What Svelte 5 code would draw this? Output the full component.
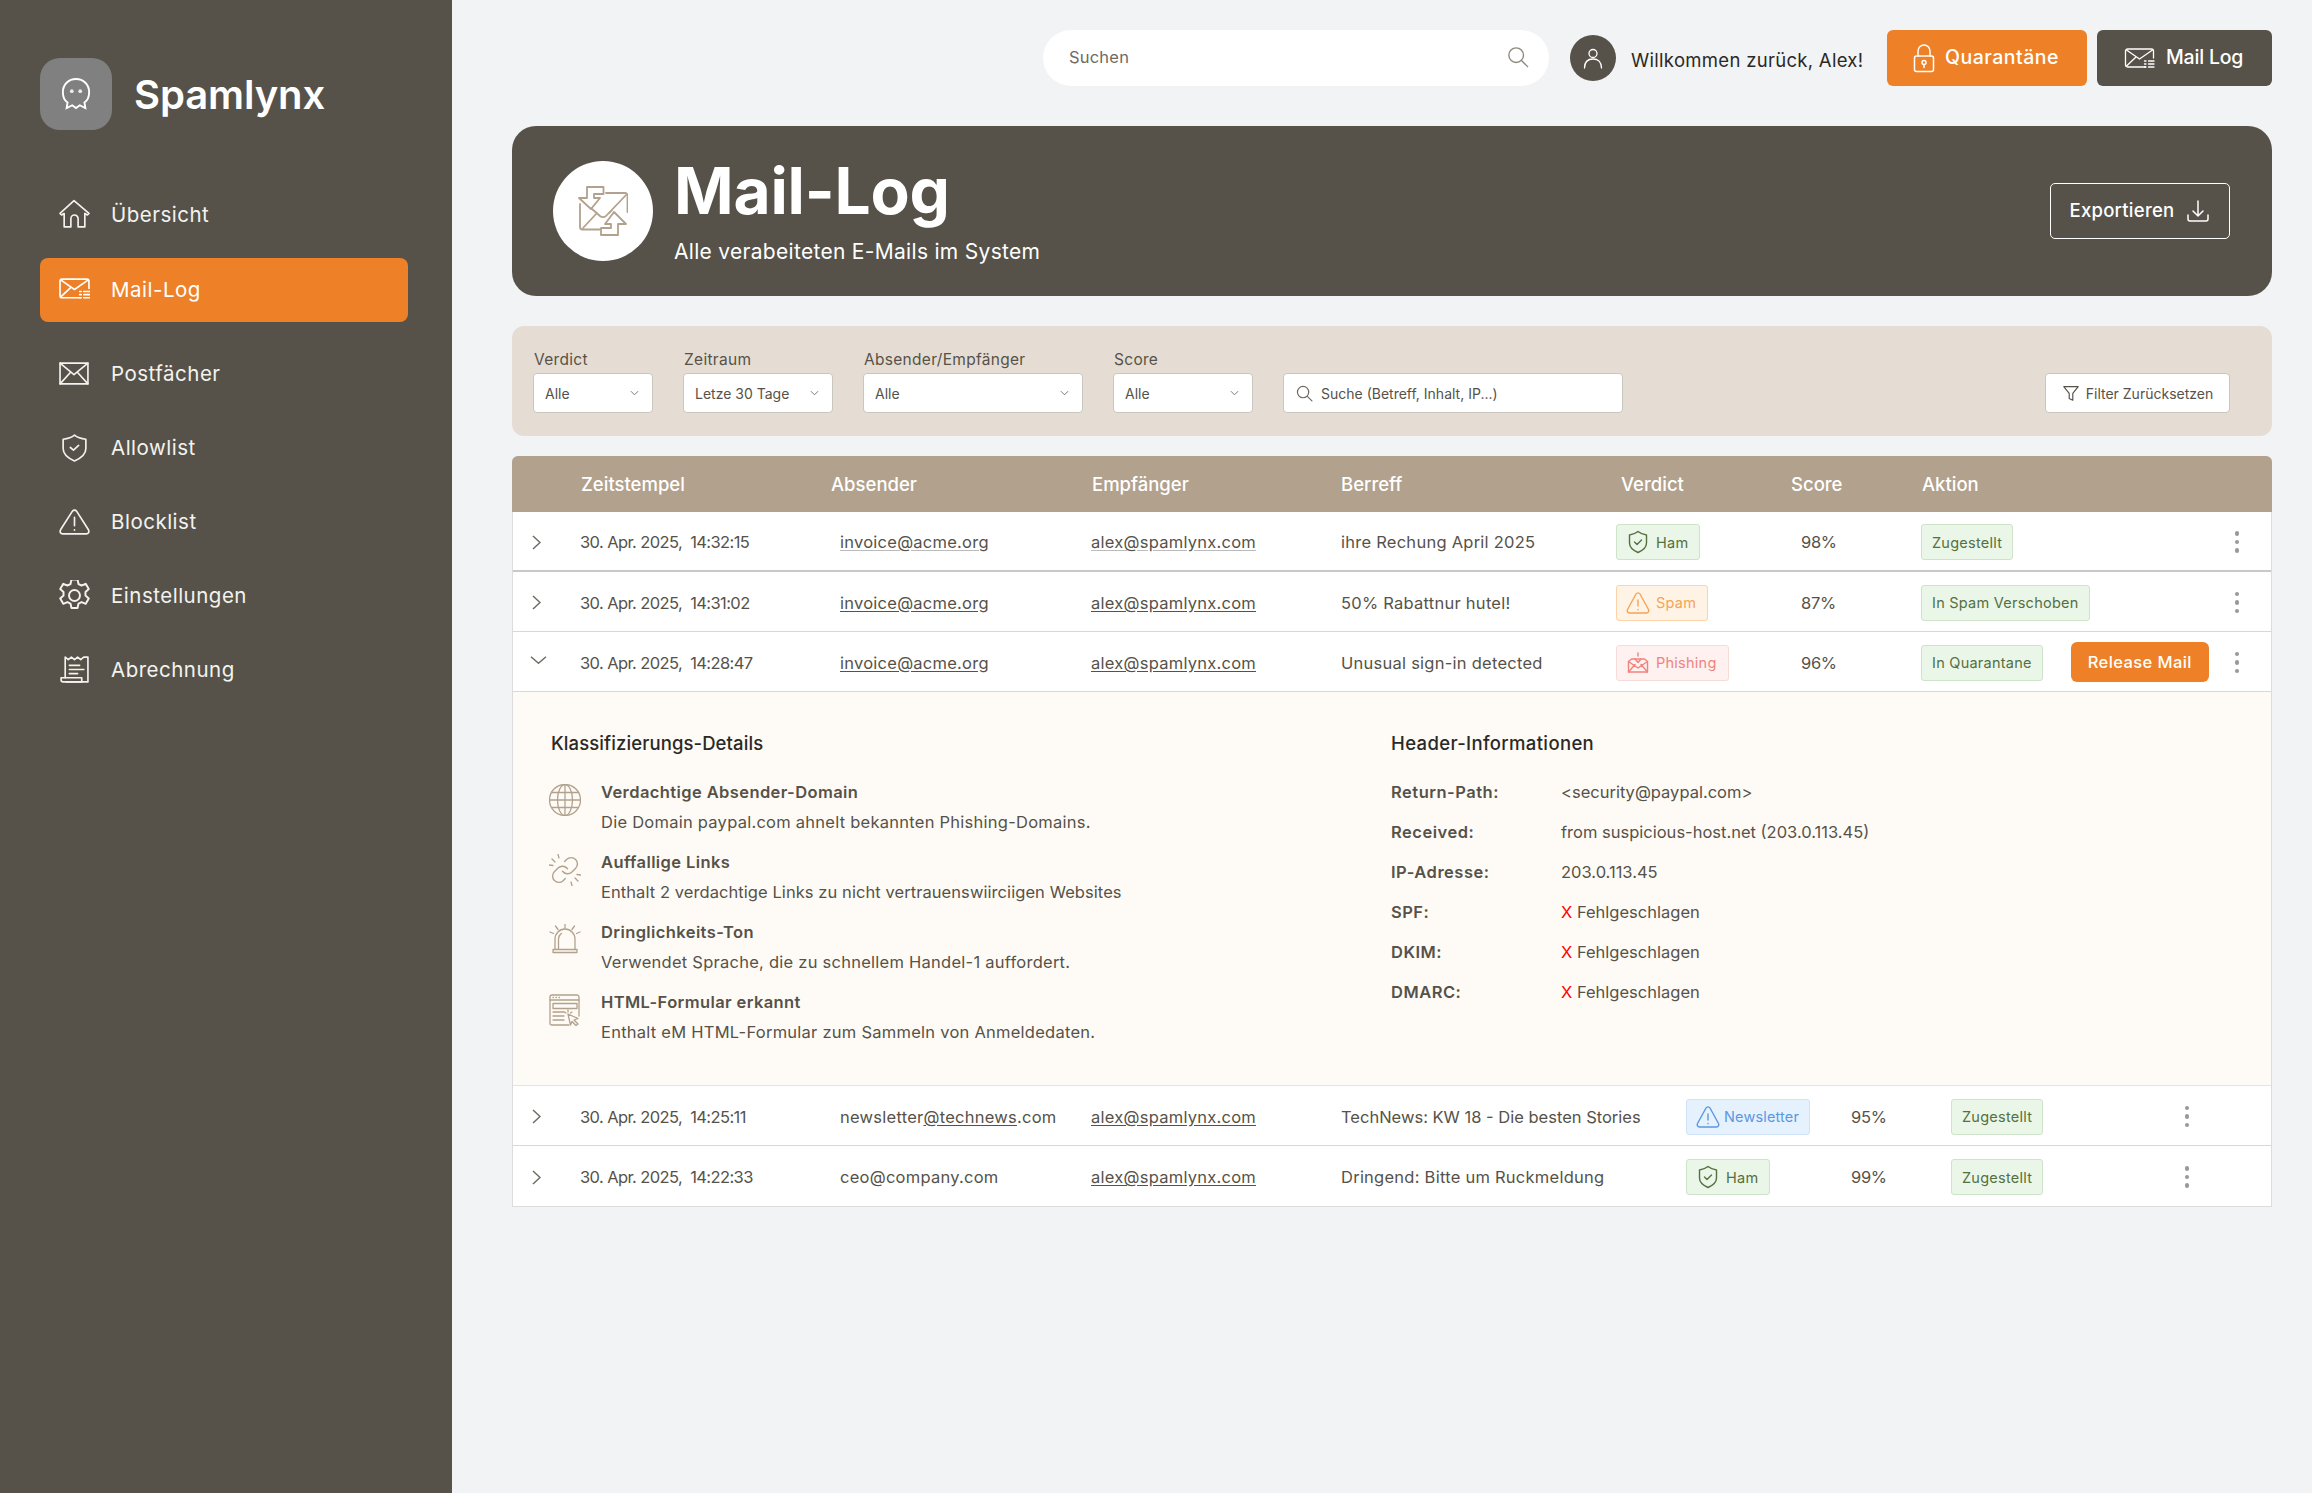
<script lang="ts">
  const nav = [
    { key: 'home', label: 'Übersicht', cls: 'n1' },
    { key: 'log', label: 'Mail-Log', cls: 'active' },
    { key: 'mail', label: 'Postfächer', cls: 'n3' },
    { key: 'shield', label: 'Allowlist', cls: '' },
    { key: 'warn', label: 'Blocklist', cls: '' },
    { key: 'gear', label: 'Einstellungen', cls: '' },
    { key: 'bill', label: 'Abrechnung', cls: '' }
  ];

  const filters = [
    { label: 'Verdict', value: 'Alle', cls: 'f-verdict' },
    { label: 'Zeitraum', value: 'Letze 30 Tage', cls: 'f-time' },
    { label: 'Absender/Empfänger', value: 'Alle', cls: 'f-sender' },
    { label: 'Score', value: 'Alle', cls: 'f-score' }
  ];

  const findings = [
    { icon: 'globe', title: 'Verdachtige Absender-Domain', text: 'Die Domain paypal.com ahnelt bekannten Phishing-Domains.' },
    { icon: 'link', title: 'Auffallige Links', text: 'Enthalt 2 verdachtige Links zu nicht vertrauenswiirciigen Websites' },
    { icon: 'siren', title: 'Dringlichkeits-Ton', text: 'Verwendet Sprache, die zu schnellem Handel-1 auffordert.' },
    { icon: 'form', title: 'HTML-Formular erkannt', text: 'Enthalt eM HTML-Formular zum Sammeln von Anmeldedaten.' }
  ];

  const headers = [
    ['Return-Path:', '<security@paypal.com>'],
    ['Received:', 'from suspicious-host.net (203.0.113.45)'],
    ['IP-Adresse:', '203.0.113.45']
  ];
  const checks = ['SPF:', 'DKIM:', 'DMARC:'];

  const upperRows = [
    { time: '14:32:15', subject: 'ihre Rechung April 2025', verdict: 'Ham', score: '98%', action: 'Zugestellt' },
    { time: '14:31:02', subject: '50% Rabattnur hutel!', verdict: 'Spam', score: '87%', action: 'In Spam Verschoben' },
    { time: '14:28:47', subject: 'Unusual sign-in detected', verdict: 'Phishing', score: '96%', action: 'In Quarantane', open: true }
  ];
</script>

{#snippet navIcon(key)}
  <svg class="nav-icon" viewBox="0 0 30 30" fill="none" stroke="currentColor" stroke-width="1.6" stroke-linecap="round" stroke-linejoin="round">
    {#if key === 'home'}
      <path d="M1 14 14.500 1.500 29 14l-1.500 1.500-2.500-1.500V27h-6.500v-8a3.500 3.500 0 0 0-7 0v8H5V14l-2.500 1.500z" />
    {:else if key === 'log'}
      <path d="M21 22H3a2 2 0 0 1-2-2V6a2 2 0 0 1 2-2h24a2 2 0 0 1 2 2v7" />
      <path d="m2 5 13 9 13-9M2 21l9-8.500" />
      <path d="M20 16h1.500M24 16h6M20 19h1.500M24 19h6M20 22h1.500M24 22h6" />
    {:else if key === 'mail'}
      <path d="M1 5h27v20H1z" />
      <path d="m1 5 13.500 11L28 5M1 25l10-11M28 25 18 14" />
    {:else if key === 'shield'}
      <path d="M15 3c3 2.500 7 3.500 11 4v9c0 6-5 9.500-11 12-6-2.500-11-6-11-12V7c4-.5 8-1.500 11-4z" />
      <path d="m11 15 3 2.500 5-4.500" />
    {:else if key === 'warn'}
      <path d="M13 5a2.500 2.500 0 0 1 4 0l11.500 18c1 2 0 4-2 4H3.500c-2 0-3-2-2-4z" />
      <path d="M15 11v8M15 23v.5" />
    {:else if key === 'gear'}
      <g transform="translate(15 15) scale(1.180) translate(-15 -15)">
        <circle cx="15" cy="15" r="4.500" />
        <path d="M12.500 2h5l.8 3.600 2.500 1.200 3.400-1.400 2.500 4.300-2.700 2.500v2.800l2.700 2.500-2.500 4.300-3.400-1.400-2.500 1.200-.8 3.600h-5l-.8-3.600-2.500-1.200-3.400 1.400-2.500-4.300 2.700-2.500v-2.800L3.300 9.700l2.500-4.300 3.400 1.400 2.500-1.200z" />
      </g>
    {:else}
      <path d="M6 23V3l3 2.500L12 3l3 2.500L18 3l3 2.500L24 3h4v24H7" />
      <path d="M10 11h10M10 15h14M10 19h8" />
      <path d="M22 23H2v2a2 2 0 0 0 2 2h18z" />
    {/if}
  </svg>
{/snippet}

{#snippet verdictIcon(kind)}
  <svg class="v-icon" viewBox="0 0 24 24" fill="none" stroke="currentColor" stroke-width="1.400" stroke-linecap="round" stroke-linejoin="round">
    {#if kind === 'Ham'}
      <path d="M12 1.500c2.500 2 5.500 3 8.500 3.500V13c0 4.500-4 7.500-8.500 9.500-4.500-2-8.500-5-8.500-9.500V5c3-.5 6-1.500 8.500-3.500z" />
      <path d="m8.500 12 2.500 2.500 4.500-4.500" />
    {:else if kind === 'Phishing'}
      <path d="M2.500 10.500V21h19V10.500l-3-2.500h-13z" />
      <path d="m2.500 10.500 9.500 6.500 9.500-6.500M2.500 21l6.500-7.500M21.500 21 15 13.500" />
      <path d="M12 2v3M9 8l3 3.500L15 8" />
    {:else}
      <path d="M10 3a2.300 2.300 0 0 1 4 0l8.500 15.500c.8 1.700-.2 3.500-2 3.500h-17c-1.800 0-2.800-1.800-2-3.500z" />
      <path d="M12 9v6M12 18.500v.2" />
    {/if}
  </svg>
{/snippet}

{#snippet badge(kind)}
  <span class="badge {kind.toLowerCase()}">{@render verdictIcon(kind)}{kind}</span>
{/snippet}

{#snippet kebab()}
  <span class="kebab"><i></i><i></i><i></i></span>
{/snippet}

{#snippet chevron(open = false)}
  {#if open}
    <svg class="chev-open" viewBox="0 0 17 8" fill="none" stroke="#6f6b63" stroke-width="1.500"><path d="m1 .8 7.500 6.400L16 .8" /></svg>
  {:else}
    <svg class="chev" viewBox="0 0 9 15" fill="none" stroke="#6f6b63" stroke-width="1.500"><path d="m1 1 7 6.500L1 14" /></svg>
  {/if}
{/snippet}

{#snippet findingIcon(kind)}
  <svg class="finding-icon" viewBox="0 0 32 32" fill="none" stroke="#b2a18c" stroke-width="1.300" stroke-linecap="round" stroke-linejoin="round">
    {#if kind === 'globe'}
      <circle cx="16" cy="16" r="15.500" />
      <ellipse cx="16" cy="16" rx="7.500" ry="15.500" />
      <path d="M16 .5v31M.5 16h31M2.500 8.500h27M2.500 23.500h27" />
    {:else if kind === 'link'}
      <g transform="translate(16 16) scale(1.250) translate(-12 -12)" stroke-width="1.100">
        <path d="M10 13a5 5 0 0 0 7.540.54l3-3a5 5 0 0 0-7.070-7.070l-1.720 1.710" />
        <path d="M14 11a5 5 0 0 0-7.540-.54l-3 3a5 5 0 0 0 7.070 7.070l1.710-1.710" />
      </g>
      <path d="M3 5l3 3M9 .5l1 3.500M.5 11l3.500.5M29 27l-3-3M23 31.500l-1-3.500M31.500 21l-3.500-.5" />
    {:else if kind === 'siren'}
      <path d="M6 25V15a10 10 0 0 1 20 0v10" />
      <path d="M9.500 25V15a6.500 6.500 0 0 1 3-5.500" />
      <path d="M4 25.500h24v3H4z" />
      <path d="M16 .5v3.500M6.500 2l2.500 3.500M25.500 2 23 5.500M1 8l3.500 1.500M31 8l-3.500 1.500" />
    {:else}
      <path d="M30 22V3a2 2 0 0 0-2-2H3a2 2 0 0 0-2 2v26a2 2 0 0 0 2 2h17" />
      <path d="M1 6h29M4 3.500h.5M7 3.500h.5M10 3.500h.5" />
      <path d="M4 9.500h24v5H4zM4 18h11M4 22h11M4 26h11" />
      <path d="m19 20 10 4.500-4 1.500 4 4-2 1.500-4-4-1.500 3.500z" />
      <path d="M19 16v2M15.500 18l1.500 1M23 18l-1.500 1" />
    {/if}
  </svg>
{/snippet}

<div class="app">
  <aside class="sidebar">
    <div class="brand">
      <div class="logo">
        <svg viewBox="0 0 32 36" fill="none" stroke="#fff" stroke-width="2">
          <path d="M16 2C8 2 2 8 2 16c0 5 2 9 5 11l-1 6 6-3 4 3 4-3 6 3-1-6c3-2 5-6 5-11 0-8-6-14-14-14z" />
          <circle cx="11.500" cy="15" r="2" fill="#fff" stroke="none" opacity=".85" />
          <circle cx="20.500" cy="15" r="2" fill="#fff" stroke="none" opacity=".85" />
        </svg>
      </div>
      <span class="brand-name">Spamlynx</span>
    </div>
    <nav>
      {#each nav as item}
        <div class="nav-item {item.cls}">
          {@render navIcon(item.key)}
          <span>{item.label}</span>
        </div>
      {/each}
    </nav>
  </aside>

  <main>
    <header class="topbar">
      <div class="search">
        <span>Suchen</span>
        <svg viewBox="0 0 24 24" fill="none" stroke="#8d887e" stroke-width="1.500" stroke-linecap="round"><circle cx="10" cy="10" r="8" /><path d="m16 16 6.500 6.500" /></svg>
      </div>
      <div class="avatar">
        <svg viewBox="0 0 24 24" fill="none" stroke="#fff" stroke-width="1.300" stroke-linecap="round"><circle cx="12" cy="7.500" r="4" /><path d="M3.500 22c0-6 3.500-9 8.500-9s8.500 3 8.500 9" /></svg>
      </div>
      <span class="welcome">Willkommen zurück, Alex!</span>
      <button class="top-btn orange">
        <svg viewBox="0 0 22 30" fill="none" stroke="#fff" stroke-width="1.500" stroke-linecap="round"><path d="M5 13V8a6 6 0 0 1 12 0v5" /><rect x="1.500" y="13" width="19" height="15.500" rx="2" /><circle cx="11" cy="19.500" r="2" /><path d="M11 21.500v3" /></svg>
        <span>Quarantäne</span>
      </button>
      <button class="top-btn dark">
        <svg viewBox="0 0 30 22" fill="none" stroke="#fff" stroke-width="1.300" stroke-linecap="round" stroke-linejoin="round"><path d="M21 20H3a2 2 0 0 1-2-2V4a2 2 0 0 1 2-2h24a2 2 0 0 1 2 2v7" /><path d="m2 3 13 9 13-9M2 19l9-8.500" /><path d="M20 14h1.500M24 14h5.500M20 17h1.500M24 17h5.500M20 20h1.500M24 20h5.500" /></svg>
        <span>Mail Log</span>
      </button>
    </header>

    <section class="hero">
      <div class="hero-icon">
        <svg viewBox="0 0 50 50" fill="none" stroke="#b2a18c" stroke-width="1.800" stroke-linejoin="round" stroke-linecap="round">
          <path d="M28 7h19a2.500 2.500 0 0 1 2.500 2.500V26M2 18v23a2.500 2.500 0 0 0 2.500 2.500H22" />
          <path d="M14 23l8 7a5 5 0 0 0 6 0L48 9M5 42l14-15M31 27l3-3" />
          <path d="M25.500 1H9v11H1l12 11 9-11h-6V8h9.500z" />
          <path d="M23 49h17V38h8L36 26l-9 12h6v4H23z" />
        </svg>
      </div>
      <div class="hero-text">
        <h1>Mail-Log</h1>
        <p>Alle verabeiteten E-Mails im System</p>
      </div>
      <button class="export">
        <span>Exportieren</span>
        <svg viewBox="0 0 24 24" fill="none" stroke="#fff" stroke-width="1.500" stroke-linecap="round" stroke-linejoin="round"><path d="M12 2v15M7 12l5 5 5-5M2 16v4a2 2 0 0 0 2 2h16a2 2 0 0 0 2-2v-4" /></svg>
      </button>
    </section>

    <section class="filters">
      {#each filters as f}
        <div class="field {f.cls}">
          <span class="field-label">{f.label}</span>
          <div class="select">
            <span>{f.value}</span>
            <svg viewBox="0 0 10 6" fill="none" stroke="#6f6b63" stroke-width="1"><path d="m1 1 4 4 4-4" /></svg>
          </div>
        </div>
      {/each}
      <div class="filter-search">
        <svg viewBox="0 0 24 24" fill="none" stroke="#6f6b63" stroke-width="1.700" stroke-linecap="round"><circle cx="10" cy="10" r="8" /><path d="m16 16 6.500 6.500" /></svg>
        <span>Suche (Betreff, Inhalt, IP...)</span>
      </div>
      <button class="reset">
        <svg viewBox="0 0 20 20" fill="none" stroke="#565249" stroke-width="1.300" stroke-linejoin="round"><path d="M2 3h16l-6 7.500V18l-4-2v-5.500z" /></svg>
        Filter Zurücksetzen
      </button>
    </section>

    <section class="table">
      <div class="thead">
        <span>Zeitstempel</span><span>Absender</span><span>Empfänger</span><span>Berreff</span><span>Verdict</span><span>Score</span><span>Aktion</span>
      </div>

      {#each upperRows as row, i}
        <div class="row upper" class:first={i === 0}>
          <span class="chev-cell">{@render chevron(row.open)}</span>
          <span class="time">30. Apr. 2025,  {row.time}</span>
          <span><a href="#a">invoice@acme.org</a></span>
          <span><a href="#b">alex@spamlynx.com</a></span>
          <span>{row.subject}</span>
          <span>{@render badge(row.verdict)}</span>
          <span class="score">{row.score}</span>
          <span class="actions">
            <span class="status">{row.action}</span>
            {#if row.open}<button class="release">Release Mail</button>{/if}
          </span>
          {@render kebab()}
        </div>
      {/each}

      <div class="details">
        <div class="col-left">
          <h3>Klassifizierungs-Details</h3>
          {#each findings as item}
            <div class="finding {item.icon}">
              {@render findingIcon(item.icon)}
              <div>
                <strong>{item.title}</strong>
                <p>{item.text}</p>
              </div>
            </div>
          {/each}
        </div>
        <div class="col-right">
          <h3>Header-Informationen</h3>
          {#each headers as [k, v]}
            <div class="kv"><strong>{k}</strong><span>{v}</span></div>
          {/each}
          {#each checks as k}
            <div class="kv"><strong>{k}</strong><span><em>X</em> Fehlgeschlagen</span></div>
          {/each}
        </div>
      </div>

      <div class="row lower">
        <span class="chev-cell">{@render chevron()}</span>
        <span class="time">30. Apr. 2025,  14:25:11</span>
        <span>newsletter<a href="#c">@technews</a>.com</span>
        <span><a href="#b">alex@spamlynx.com</a></span>
        <span class="tight">TechNews: KW 18 - Die besten Stories</span>
        <span>{@render badge('Newsletter')}</span>
        <span class="score">95%</span>
        <span class="actions"><span class="status">Zugestellt</span></span>
        {@render kebab()}
      </div>
      <div class="row lower last">
        <span class="chev-cell">{@render chevron()}</span>
        <span class="time">30. Apr. 2025,  14:22:33</span>
        <span>ceo@company.com</span>
        <span><a href="#b">alex@spamlynx.com</a></span>
        <span>Dringend: Bitte um Ruckmeldung</span>
        <span>{@render badge('Ham')}</span>
        <span class="score">99%</span>
        <span class="actions"><span class="status">Zugestellt</span></span>
        {@render kebab()}
      </div>
    </section>
  </main>
</div>

<style>
  :global(body) {
    margin: 0;
    background: #f1f3f5;
    font-family: Inter, "Open Sans", sans-serif;
    color: #565249;
  }

  .app {
    display: grid;
    grid-template-columns: 452px minmax(0, 1fr);
    min-height: 1493px;
  }

  .sidebar {
    background: #565249;
    color: #fff;
    padding: 58px 44px 0 40px;
  }

  .brand {
    display: flex;
    align-items: center;
    gap: 22px;
    height: 72px;
    margin-bottom: 47px;
  }

  .logo {
    width: 72px;
    height: 72px;
    border-radius: 20px;
    background: #808080;
    display: flex;
    align-items: center;
    justify-content: center;
  }

  .logo svg {
    width: 30px;
    height: 34px;
  }

  .brand-name {
    font-size: 40px;
    font-weight: 600;
    letter-spacing: -0.1px;
  }

  .nav-item {
    display: flex;
    align-items: center;
    gap: 21px;
    height: 74px;
    padding-left: 19px;
    font-size: 20.5px;
    letter-spacing: 0.5px;
    color: #f3f2ef;
  }

  .nav-item.active {
    height: 64px;
    margin: 7px 0 14px;
    background: #ee8127;
    border-radius: 8px;
    color: #fff;
  }

  .nav-item.active span {
    padding-bottom: 2px;
  }

  .nav-icon {
    width: 31px;
    height: 31px;
    flex: none;
  }

  main {
    padding: 30px 40px 0 60px;
  }

  .topbar {
    display: flex;
    align-items: center;
    justify-content: flex-end;
    height: 56px;
  }

  .search {
    width: 506px;
    height: 56px;
    box-sizing: border-box;
    margin-right: 21px;
    padding: 0 20px 2px 26px;
    background: #fff;
    border-radius: 28px;
    display: flex;
    align-items: center;
    justify-content: space-between;
    font-size: 16.5px;
    letter-spacing: 0.2px;
    color: #6f6b63;
  }

  .search svg {
    width: 22px;
    height: 22px;
  }

  .avatar {
    width: 46px;
    height: 46px;
    border-radius: 50%;
    background: #565249;
    margin-right: 15px;
    display: flex;
    align-items: center;
    justify-content: center;
  }

  .avatar svg {
    width: 24px;
    height: 24px;
  }

  .welcome {
    width: 256px;
    font-size: 18.500px;
    letter-spacing: 0.3px;
    color: #2a2926;
    padding-top: 4px;
  }

  .top-btn {
    height: 56px;
    border: 0;
    border-radius: 6px;
    color: #fff;
    font: 500 19.500px Inter, sans-serif;
    display: flex;
    align-items: center;
    padding: 0 0 0 26px;
    gap: 10px;
  }

  .top-btn span {
    padding-bottom: 2px;
  }

  .orange {
    width: 200px;
    background: #ee8127;
    margin-right: 10px;
    letter-spacing: 0.5px;
  }

  .orange svg {
    width: 22px;
    height: 30px;
  }

  .dark {
    width: 175px;
    background: #565249;
    padding-left: 27px;
    gap: 11px;
    letter-spacing: -0.2px;
  }

  .dark svg {
    width: 31px;
    height: 22px;
  }

  .hero {
    margin-top: 40px;
    height: 170px;
    background: #565249;
    border-radius: 24px;
    color: #fff;
    display: flex;
    align-items: center;
    padding: 0 42px 0 41px;
  }

  .hero-icon {
    width: 100px;
    height: 100px;
    border-radius: 50%;
    background: #fff;
    display: flex;
    align-items: center;
    justify-content: center;
    margin-right: 21px;
  }

  .hero-icon svg {
    width: 50px;
    height: 50px;
  }

  .hero-text {
    flex: 1;
    margin-top: -4px;
  }

  h1 {
    margin: -3px 0 0;
    font-size: 64px;
    line-height: 78px;
    font-weight: 700;
    letter-spacing: -0.2px;
  }

  .hero-text p {
    margin: 9px 0 0;
    font-size: 21px;
    letter-spacing: 0.3px;
  }

  .export {
    width: 180px;
    height: 56px;
    background: none;
    border: 1.500px solid #fff;
    border-radius: 5px;
    color: #fff;
    font: 500 18.500px Inter, sans-serif;
    letter-spacing: 0.25px;
    display: flex;
    align-items: center;
    justify-content: center;
    gap: 12px;
  }

  .export span {
    padding-bottom: 2px;
  }

  .export svg {
    width: 24px;
    height: 24px;
  }

  .filters {
    margin-top: 30px;
    height: 110px;
    box-sizing: border-box;
    background: #e5ddd3;
    border-radius: 12px;
    display: flex;
    align-items: flex-end;
    gap: 30px;
    padding: 0 42px 23px 21px;
  }

  .field-label {
    display: block;
    font-size: 15.500px;
    letter-spacing: 0.3px;
    margin: 0 0 4px 1px;
  }

  .select,
  .filter-search,
  .reset {
    height: 40px;
    box-sizing: border-box;
    background: #fff;
    border: 1px solid #c9c6c0;
    border-radius: 4px;
    font-size: 14px;
    color: #565249;
    display: flex;
    align-items: center;
  }

  .select {
    justify-content: space-between;
    padding: 0 13px 0 11px;
  }

  .select svg {
    width: 9px;
    height: 6px;
  }

  .f-verdict { width: 120px; }
  .f-time { width: 150px; }
  .f-sender { width: 220px; }
  .f-score { width: 140px; }

  .filter-search {
    width: 340px;
    padding-left: 12px;
    gap: 8px;
  }

  .filter-search svg {
    width: 17px;
    height: 17px;
  }

  .reset {
    width: 185px;
    margin-left: auto;
    justify-content: center;
    gap: 6px;
    font-family: Inter, sans-serif;
    padding: 0;
  }

  .reset svg {
    width: 18px;
    height: 18px;
  }

  .table {
    margin-top: 20px;
    border: 1px solid #dcdcdc;
    border-top: 0;
    border-radius: 6px 6px 0 0;
  }

  .thead {
    height: 56px;
    margin: 0 -1px;
    padding-left: 69px;
    background: #b2a18c;
    border-radius: 6px 6px 0 0;
    color: #fff;
    font-size: 18.500px;
    font-weight: 500;
    display: grid;
    grid-template-columns: 250px 261px 249px 280px 170px 131px 1fr;
    align-items: center;
  }

  .row {
    height: 60px;
    box-sizing: border-box;
    padding-top: 2px;
    background: #fff;
    border-bottom: 1.500px solid #d8d8d8;
    display: grid;
    align-items: center;
    font-size: 16.500px;
    letter-spacing: 0.25px;
    color: #565249;
  }

  .row.upper {
    grid-template-columns: 67px 260px 251px 250px 275px 185px 120px minmax(0, 1fr) 68px;
  }

  .row.lower {
    grid-template-columns: 67px 260px 251px 250px 345px 165px 100px minmax(0, 1fr) 168px;
  }

  .row.last {
    border-bottom: 0;
  }

  .row.first {
    border-bottom: 2px solid #c8c8c8;
  }

  .row.first a {
    text-decoration-color: #bbb;
  }

  .row a {
    color: inherit;
    text-underline-offset: 2px;
  }

  .time {
    white-space: pre;
    letter-spacing: -0.6px;
  }

  .tight {
    letter-spacing: 0;
  }

  .chev-cell {
    padding-left: 19px;
    display: flex;
  }

  .chev {
    width: 9px;
    height: 15px;
  }

  .chev-open {
    width: 17px;
    height: 8px;
    margin: -6px 0 0 -2px;
  }

  .score {
    white-space: nowrap;
    letter-spacing: -0.3px;
  }

  .badge,
  .status {
    display: inline-flex;
    align-items: center;
    height: 36px;
    box-sizing: border-box;
    border-radius: 3px;
    font-size: 14.500px;
    letter-spacing: 0.25px;
    white-space: nowrap;
  }

  .badge {
    padding: 0 11px 0 9px;
    gap: 6px;
    border: 1px solid;
    vertical-align: middle;
  }

  .v-icon {
    width: 24px;
    height: 24px;
  }

  .ham,
  .status {
    background: #eaf6e8;
    border: 1px solid #cfe3cb;
    color: #55703f;
  }

  .spam {
    background: #fff3e6;
    border-color: #fbd3a8;
    color: #f6a356;
  }

  .phishing {
    background: #fef1ef;
    border-color: #f6dcd8;
    color: #f0837f;
  }

  .newsletter {
    background: #e5f1fd;
    border-color: #cfe3f8;
    color: #5a97e0;
    gap: 4px;
    letter-spacing: 0.15px;
    padding-right: 10px;
  }

  .status {
    padding: 0 10px;
  }

  .actions {
    display: flex;
    align-items: center;
    gap: 28px;
  }

  .release {
    flex: none;
    width: 138px;
    height: 40px;
    margin-top: -2px;
    border: 0;
    border-radius: 6px;
    background: #ee8127;
    color: #fff;
    font: 500 16.500px Inter, sans-serif;
    letter-spacing: 0.4px;
  }

  .kebab {
    justify-self: center;
    display: flex;
    flex-direction: column;
    gap: 4px;
  }

  .kebab i {
    width: 4.500px;
    height: 4.500px;
    border-radius: 50%;
    background: #999;
  }

  .details {
    height: 394px;
    box-sizing: border-box;
    background: #fefbf6;
    border-bottom: 1.500px solid #e6e4df;
    display: grid;
    grid-template-columns: 842px 1fr;
    padding: 38px 0 0 36px;
  }

  h3 {
    margin: 0 0 23px 2px;
    font-size: 18.500px;
    line-height: 26px;
    font-weight: 500;
    letter-spacing: 0.1px;
    color: #2a2926;
  }

  .finding {
    display: flex;
    gap: 20px;
    height: 70px;
  }

  .finding-icon {
    width: 32px;
    height: 32px;
    flex: none;
    margin-top: 5px;
  }

  .finding strong {
    display: block;
    font-size: 16.500px;
    line-height: 26px;
    font-weight: 600;
    letter-spacing: 0.4px;
  }

  .finding p {
    margin: 4px 0 0;
    font-size: 16.500px;
    line-height: 26px;
    letter-spacing: 0.25px;
  }

  .finding.link p {
    letter-spacing: 0.07px;
  }

  .col-right h3 {
    margin-left: 0;
    letter-spacing: 0.35px;
  }

  .kv {
    display: grid;
    grid-template-columns: 170px 1fr;
    height: 40px;
    font-size: 16.500px;
    line-height: 26px;
  }

  .kv strong {
    font-weight: 600;
    letter-spacing: 0.5px;
  }

  .kv em {
    font-style: normal;
    color: #f00;
  }
</style>
